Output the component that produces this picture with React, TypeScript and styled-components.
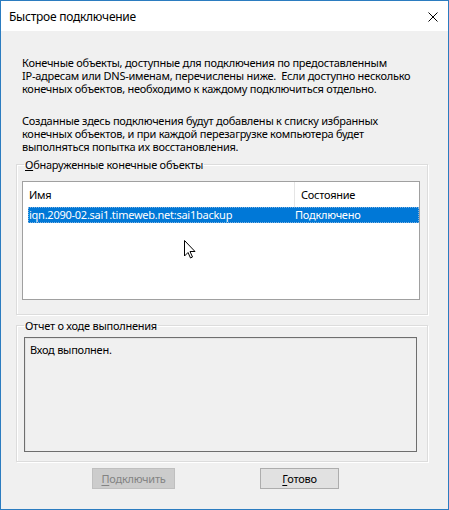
import React from 'react'
import styled, { createGlobalStyle } from 'styled-components'

const GlobalStyle = createGlobalStyle`
  html, body {
    margin: 0;
    padding: 0;
    background: #f0f0f0;
  }
  body {
    font-family: 'Noto Sans', 'Liberation Sans', sans-serif;
    font-size: 11px;
    letter-spacing: -0.25px;
    color: #000;
  }
`

const targets = [{ name: 'iqn.2090-02.sai1.timeweb.net:sai1backup', state: 'Подключено' }]

const App = () => {
  return (
    <>
      <GlobalStyle />
      <Window>
        <TitleBar>
          <Title>Быстрое подключение</Title>
          <CloseIcon viewBox="0 0 10 10">
            <path d="M0.5 0.5 L9.5 9.5 M9.5 0.5 L0.5 9.5" stroke="#000" strokeWidth="1" />
          </CloseIcon>
        </TitleBar>
        <Client>
          <Paragraph>
            Конечные объекты, доступные для подключения по предоставленным
            <br />
            IP-адресам или DNS-именам, перечислены ниже.&nbsp; Если доступно несколько
            <br />
            конечных объектов, необходимо к каждому подключиться отдельно.
          </Paragraph>
          <Paragraph $top={19}>
            Созданные здесь подключения будут добавлены к списку избранных
            <br />
            конечных объектов, и при каждой перезагрузке компьютера будет
            <br />
            выполняться попытка их восстановления.
          </Paragraph>

          <Group $top={5} $padTop={10} $padBottom={14}>
            <Legend>
              <u>О</u>бнаруженные конечные объекты
            </Legend>
            <ListView>
              <HeaderRow>
                <HeaderCell $w={271}>Имя</HeaderCell>
                <HeaderCell $divider>Состояние</HeaderCell>
              </HeaderRow>
              {targets.map((t) => (
                <ItemRow key={t.name} $selected>
                  <ItemCell $w={266}>{t.name}</ItemCell>
                  <ItemCell>{t.state}</ItemCell>
                </ItemRow>
              ))}
            </ListView>
          </Group>

          <Group $top={4} $padTop={5} $padBottom={9}>
            <Legend>Отчет о ходе выполнения</Legend>
            <LogBox>Вход выполнен.</LogBox>
          </Group>

          <ButtonRow>
            <Button disabled $w={83}>
              <u>П</u>одключить
            </Button>
            <Button $w={79}>
              <u>Г</u>отово
            </Button>
          </ButtonRow>
        </Client>
        <Cursor viewBox="0 0 12 19">
          <path
            d="M0.5 0.5 L0.5 16 L4 12.5 L6.5 18 L8.5 17 L6 11.5 L11 11.5 Z"
            fill="#fff"
            stroke="#000"
            strokeWidth="1"
            strokeLinejoin="miter"
          />
        </Cursor>
      </Window>
    </>
  )
}

const Window = styled.div`
  position: relative;
  width: 449px;
  height: 510px;
  box-sizing: border-box;
  border: 1px solid #2b7cc0;
  background: #f0f0f0;
  display: flex;
  flex-direction: column;
  overflow: hidden;
`

const TitleBar = styled.div`
  height: 30px;
  background: #fff;
  display: flex;
  align-items: center;
  justify-content: space-between;
  padding: 0 10px 0 8px;
  flex-shrink: 0;
`

const Title = styled.div`
  font-size: 12px;
  line-height: 14px;
  margin-top: 1px;
`

const CloseIcon = styled.svg`
  width: 10px;
  height: 10px;
  margin-top: 1px;
`

const Client = styled.div`
  flex: 1;
  display: flex;
  flex-direction: column;
  padding: 25px 0 0 15px;
`

const Paragraph = styled.div<{ $top?: number }>`
  margin: ${(p) => p.$top ?? 0}px 0 0 6px;
  line-height: 13px;
  white-space: nowrap;
`

const Group = styled.fieldset<{ $top: number; $padTop: number; $padBottom: number }>`
  margin: ${(p) => p.$top}px 0 0 0;
  width: 412px;
  box-sizing: border-box;
  border: 1px solid #dcdcdc;
  box-shadow: inset 1px 1px 0 #fff, 1px 1px 0 #fff;
  padding: ${(p) => p.$padTop}px 5px ${(p) => p.$padBottom}px 5px;
  min-width: 0;
`

const Legend = styled.legend`
  margin-left: 2px;
  padding: 0 1px;
  line-height: 13px;
`

const ListView = styled.div`
  width: 398px;
  height: 119px;
  box-sizing: border-box;
  background: #fff;
  border: 1px solid #a0a0a0;
`

const HeaderRow = styled.div`
  display: flex;
  height: 25px;
  align-items: stretch;
`

const HeaderCell = styled.div<{ $w?: number; $divider?: boolean }>`
  ${(p) => (p.$w ? `width: ${p.$w}px;` : 'flex: 1;')}
  box-sizing: border-box;
  display: flex;
  align-items: center;
  padding-left: 6px;
  border-left: ${(p) => (p.$divider ? '1px solid #e5e5e5' : 'none')};
`

const ItemRow = styled.div<{ $selected?: boolean }>`
  display: flex;
  height: 16px;
  margin-left: 5px;
  align-items: center;
  background: ${(p) => (p.$selected ? '#0078d7' : 'transparent')};
  color: ${(p) => (p.$selected ? '#fff' : '#000')};
  outline: ${(p) => (p.$selected ? '1px dotted #7fb2e0' : 'none')};
  outline-offset: -1px;
`

const ItemCell = styled.div<{ $w?: number }>`
  ${(p) => (p.$w ? `width: ${p.$w}px;` : 'flex: 1;')}
  box-sizing: border-box;
  padding-left: 1px;
  white-space: nowrap;
  line-height: 16px;
`

const LogBox = styled.div`
  margin-left: 2px;
  width: 393px;
  height: 115px;
  box-sizing: border-box;
  border: 1px solid #6e6e6e;
  box-shadow: inset 1px 1px 0 #e3e3e3;
  padding: 5px 0 0 5px;
  line-height: 13px;
`

const ButtonRow = styled.div`
  display: flex;
  gap: 85px;
  margin: 6px 0 0 76px;
`

const Button = styled.button<{ $w: number }>`
  width: ${(p) => p.$w}px;
  height: 21px;
  box-sizing: border-box;
  font-family: inherit;
  font-size: 11px;
  letter-spacing: -0.25px;
  padding: 0;
  background: #e1e1e1;
  border: 1px solid #adadad;
  color: #000;
  &:disabled {
    background: #cccccc;
    border-color: #bfbfbf;
    color: #838383;
  }
  u {
    text-underline-offset: 2px;
  }
`

const Cursor = styled.svg`
  position: absolute;
  left: 183px;
  top: 239px;
  width: 12px;
  height: 19px;
`

export default App
